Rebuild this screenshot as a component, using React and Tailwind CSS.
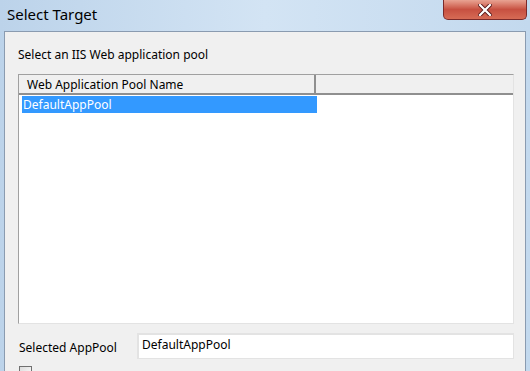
export default function App() {
  const font = { fontFamily: '"Noto Sans", "Open Sans", Arial, sans-serif' };
  return (
    <div
      className="w-[530px] h-[371px] overflow-hidden flex flex-col bg-gradient-to-r from-[#bcd3ea] via-[#d3e4f4] to-[#c3d9ee]"
      style={font}
    >
      {/* Title bar */}
      <div className="h-[31px] shrink-0 flex items-start justify-between pl-[7px] pr-[3px]">
        <div className="text-[15px] leading-[28px] text-black">Select Target</div>
        <div className="w-[84px] h-[20px] rounded-b-[5px] border border-t-0 border-[#7a2a2a] bg-gradient-to-b from-[#e8a393] via-[#c75041] to-[#d66b55] flex items-center justify-center">
          <svg width="14" height="12" viewBox="0 0 14 12">
            <path d="M2 1 L12 11 M12 1 L2 11" stroke="#5a1a1a" strokeWidth="4" strokeLinecap="square" />
            <path d="M2 1 L12 11 M12 1 L2 11" stroke="#ffffff" strokeWidth="2.2" strokeLinecap="square" />
          </svg>
        </div>
      </div>
      {/* Body */}
      <div className="flex-1 min-h-0 ml-[4px] mr-[4px] flex">
        <div className="flex-1 bg-[#f0f0f0] border-t border-l border-r border-[#8a9bb0] flex flex-col pl-[13px] pr-[11px]">
          <div className="shrink-0 text-[12px] text-black h-[42px] pt-[14px] leading-[18px]">
            Select an IIS Web application pool
          </div>
          {/* List */}
          <div className="shrink-0 h-[250px] bg-white border-t border-l border-[#a0a0a0] border-r border-r-[#e3e3e3] border-b border-b-[#e3e3e3] flex flex-col">
            <div className="h-[20px] shrink-0 flex bg-[#f0f0f0] border-b-2 border-[#8f8f8f]">
              <div className="w-[297px] border-r-2 border-[#8f8f8f] text-[12px] leading-[19px] pl-[8px] text-black">
                Web Application Pool Name
              </div>
              <div className="flex-1" />
            </div>
            <div className="pt-[1px] pl-[3px]">
              <div className="w-[295px] h-[17px] bg-[#3399ff] text-white text-[12px] leading-[17px] pl-[1px]">
                DefaultAppPool
              </div>
            </div>
          </div>
          {/* Selected AppPool */}
          <div className="shrink-0 flex items-center mt-[9px] h-[26px]">
            <div className="w-[119px] pl-[1px] text-[12px] text-black pt-[3px]">Selected AppPool</div>
            <div className="flex-1 h-[26px] bg-white border-t-2 border-l-2 border-[#6b6b6b] border-r border-b border-[#e3e3e3] text-[12px] leading-[19px] pl-[3px] text-black">
              DefaultAppPool
            </div>
          </div>
          <div className="shrink-0 mt-[7px] pl-[1px]">
            <div className="w-[13px] h-[13px] border border-[#707070] bg-gradient-to-br from-[#dcdcdc] to-[#ffffff]" />
          </div>
        </div>
      </div>
    </div>
  );
}
